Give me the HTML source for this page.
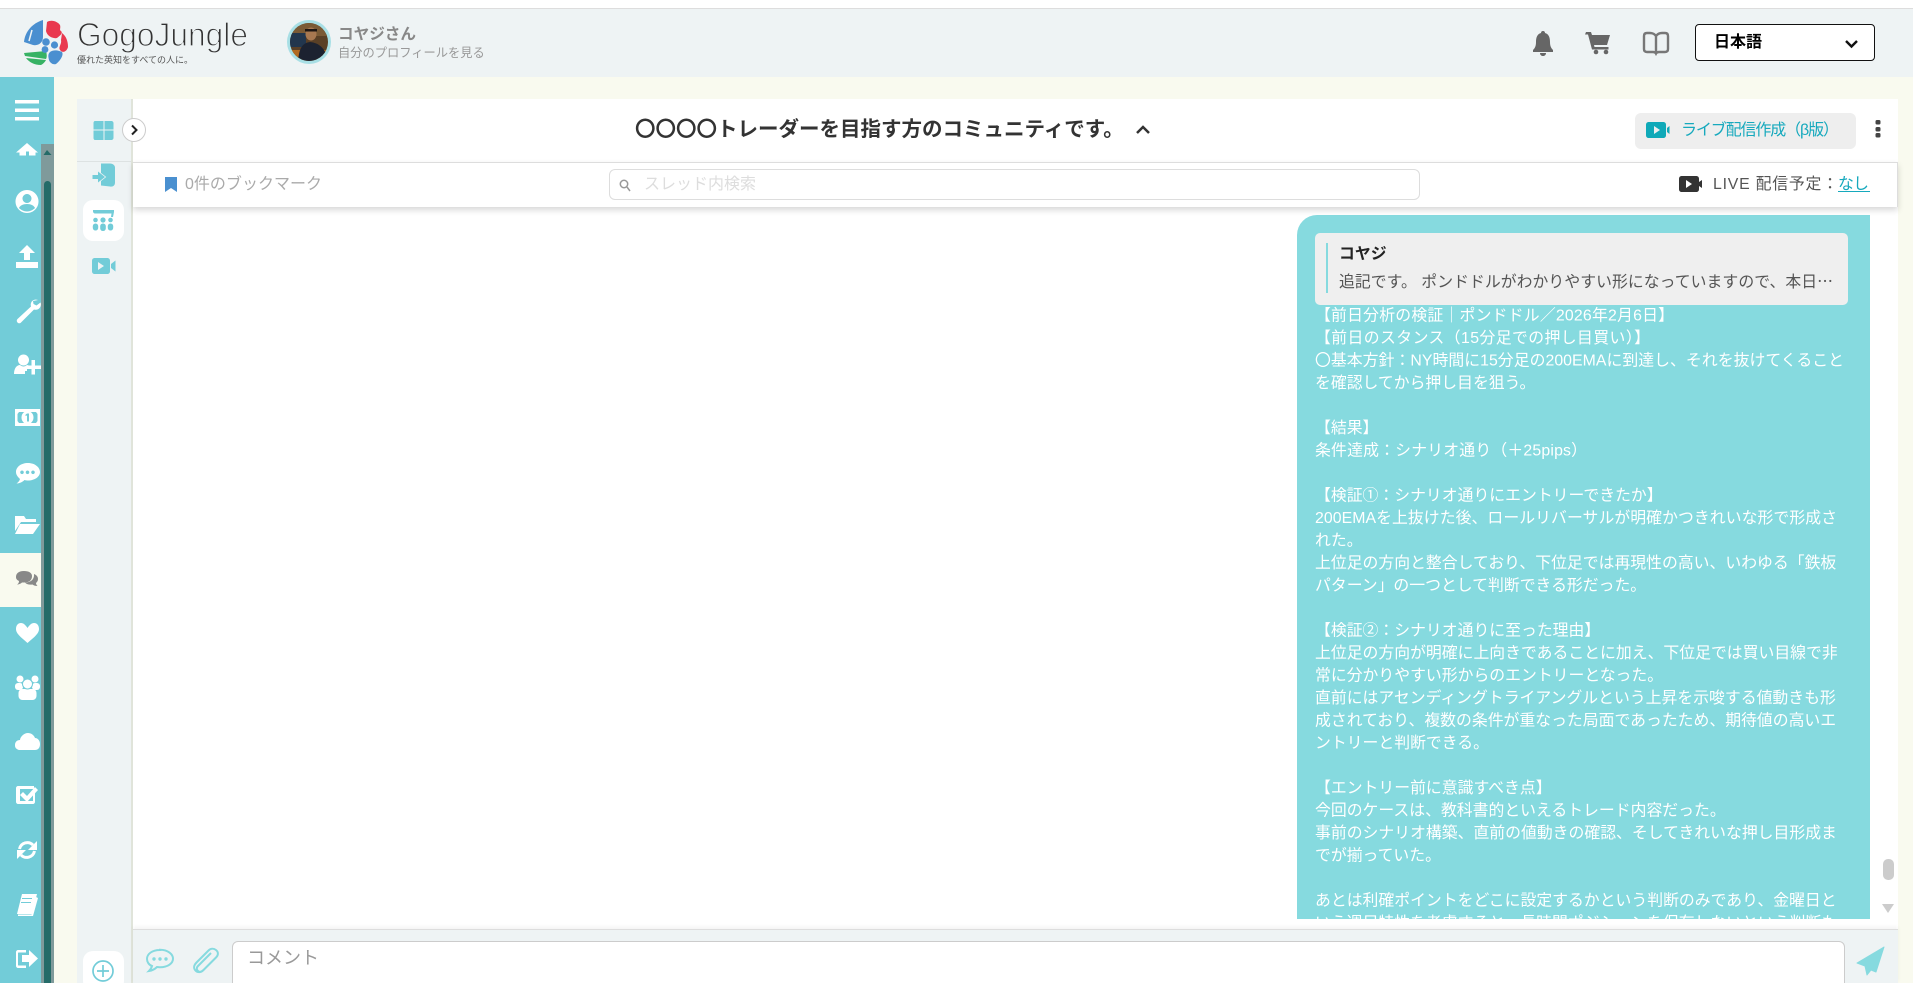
<!DOCTYPE html>
<html lang="ja"><head><meta charset="utf-8"><title>GogoJungle</title>
<style>
html,body{margin:0;padding:0;width:1913px;height:983px;overflow:hidden;background:#f9faef}
body{position:relative;font-family:"Liberation Sans","Noto Sans CJK JP",sans-serif}
.a{position:absolute;box-sizing:border-box}
svg{position:absolute;left:0;top:0;overflow:visible}
text{font-family:"Liberation Sans","Noto Sans CJK JP",sans-serif;white-space:pre}
.m text{font-size:15.85px;fill:#fff}
</style></head><body>
<div class="a" style="left:0;top:0;width:1913px;height:9px;background:#fff;border-bottom:1px solid #ddd"></div>
<div class="a" style="left:0;top:9px;width:1913px;height:68px;background:#eef3f4"></div>
<div class="a" style="left:0;top:77px;width:54px;height:906px;background:#72ccd8"></div>
<div class="a" style="left:0;top:553px;width:41px;height:54px;background:#f9faef"></div>
<div class="a" style="left:41px;top:144px;width:13px;height:839px;background:#7f9a9b"></div>
<div class="a" style="left:44px;top:181px;width:7px;height:802px;background:#246b68;border-radius:4px 4px 0 0"></div>
<div class="a" style="left:77px;top:99px;width:56px;height:884px;background:#eef3f4;border-right:2px solid #e0e4da"></div>
<div class="a" style="left:77px;top:161px;width:54px;height:1px;background:#dde2e2"></div>
<div class="a" style="left:83px;top:200px;width:41px;height:41px;background:#fff;border-radius:10px"></div>
<div class="a" style="left:83px;top:951px;width:41px;height:40px;background:#fff;border-radius:10px"></div>
<div class="a" style="left:133px;top:99px;width:1765px;height:884px;background:#fff"></div>
<div class="a" style="left:133px;top:162px;width:1765px;height:45px;background:#fff;border-top:1px solid #ddd;border-right:1px solid #ddd;box-shadow:0 3px 6px rgba(0,0,0,.16);z-index:2"></div>
<div class="a" style="left:609px;top:169px;width:811px;height:31px;background:#fff;border:1px solid #ddd;border-radius:6px;z-index:3"></div>
<div class="a" style="left:1635px;top:113px;width:221px;height:36px;background:#eee;border-radius:6px"></div>
<div class="a" style="left:1695px;top:24px;width:180px;height:37px;background:#fff;border:1.5px solid #111;border-radius:4px"></div>
<div class="a" style="left:1297px;top:215px;width:573px;height:704px;background:#86dadf;border-radius:20px 0 0 0"></div>
<div class="a" style="left:1315px;top:233px;width:533px;height:72px;background:#efefef;border-radius:5px"></div>
<div class="a" style="left:1326px;top:243px;width:2px;height:50px;background:#86dadf"></div>
<div class="a" style="left:1883px;top:859px;width:11px;height:21px;background:#ccc;border-radius:5px"></div>
<div class="a" style="left:133px;top:929px;width:1765px;height:54px;background:#eef3f4;border-top:1px solid #ddd;box-shadow:0 -2px 4px rgba(0,0,0,.05)"></div>
<div class="a" style="left:232px;top:941px;width:1613px;height:50px;background:#fff;border:1px solid #ccc;border-radius:6px"></div>

<svg width="1913" height="983" viewBox="0 0 1913 983" style="z-index:5">
<defs><clipPath id="c"><rect x="1297" y="215" width="573" height="704"/></clipPath>
<clipPath id="av"><circle cx="309" cy="42" r="19"/></clipPath></defs>

<!-- logo -->
<path d="M43 20C33 23 25 31 24 42L33 45C38 46 43 43 43 37Z" fill="#4a8fd0"/>
<path d="M32 30L29 41" stroke="#eef3f4" stroke-width="1.5" fill="none"/>
<path d="M47 22C52 19 58 22 60 25C61 28 59 30 61 31C63 33 61 35 57 38C53 39 47 36 46 31Z" fill="#e9394f"/>
<path d="M62 33C66 36 68 41 68 47C67 51 63 54 60 50C58 47 62 44 61 40Z" fill="#e9394f"/>
<path d="M24 53L46 51C47 55 47 57 46 59L25 56ZM26 58L46 60C45 62 43 64 41 65C34 65 29 62 26 58Z" fill="#37b264"/>
<circle cx="46" cy="42" r="3.8" fill="#4a8fd0"/><circle cx="54.500" cy="45" r="3.6" fill="#4a8fd0"/><circle cx="45" cy="49.500" r="3.4" fill="#4a8fd0"/>
<path d="M50 52C54 49 60 51 62 52C64 55 60 61 56 64C53 65 50 63 49 60C48 56 48 54 50 52Z" fill="#4a8fd0"/>
<text x="77" y="46" font-size="33" fill="#333" stroke="#eef3f4" stroke-width="1.2" textLength="171" lengthAdjust="spacingAndGlyphs">GogoJungle</text>
<text x="77" y="63" font-size="9" fill="#555">優れた英知をすべての人に。</text>

<!-- avatar -->
<circle cx="309" cy="42" r="22" fill="#a8dfe5"/>
<circle cx="309" cy="42" r="19" fill="#5a4026"/>
<g clip-path="url(#av)">
<rect x="288" y="22" width="44" height="14" fill="#7a5a35"/>
<rect x="290" y="33" width="16" height="14" fill="#22364d"/>
<rect x="288" y="50" width="44" height="12" fill="#b06a22"/>
<path d="M298 62C299 47 303 43 310 42C319 43 326 48 328 62Z" fill="#1c2230"/>
<ellipse cx="311" cy="34" rx="5.500" ry="6.500" fill="#a87850"/>
<rect x="305" y="29" width="12" height="2.500" fill="#1d1613"/>
</g>
<text x="338" y="39" font-size="15.600" font-weight="bold" fill="#888">コヤジさん</text>
<text x="338" y="57" font-size="12.250" fill="#999">自分のプロフィールを見る</text>

<!-- header right -->
<path d="M1543 31c1.500 0 2 1 2 2 4 1 5 5 5 9 0 4 1 6 3 8v2h-20v-2c2-2 3-4 3-8 0-4 1-8 5-9 0-1 .5-2 2-2zM1540 53h6c0 2-1.500 3-3 3s-3-1-3-3z" fill="#666"/>
<path d="M1586 32h5l1 3h18l-3 10h-13l.500 2h14v2.500h-16.500l-4-15h-3z" fill="#666"/><circle cx="1596" cy="52" r="2.300" fill="#666"/><circle cx="1606" cy="52" r="2.300" fill="#666"/>
<path d="M1656 36c-1.500-2-3-3-6-3h-3c-2 0-3 1-3 3v13c0 2 1 3 3 3h6c1.500 0 2.500 .5 3 1.500.5-1 1.500-1.500 3-1.500h6c2 0 3-1 3-3V36c0-2-1-3-3-3h-3c-3 0-4.500 1-6 3zM1656 36v17" fill="none" stroke="#777" stroke-width="2.400"/>
<text x="1714" y="47" font-size="16" font-weight="bold" fill="#000">日本語</text>
<path d="M1846 41l5.500 5.500 5.500-5.500" fill="none" stroke="#111" stroke-width="2.400"/>

<!-- sidebar icons -->
<g fill="#fff">
<rect x="15" y="100" width="24" height="3.500"/><rect x="15" y="108.500" width="24" height="3.500"/><rect x="15" y="117" width="24" height="3.500"/>
<path d="M27 143L16 152.500h3.500v3h6.500v-4h3v4h6.500v-3H38z"/>
<path fill-rule="evenodd" d="M27 190a11.500 11.500 0 1 0 .01 0zM27 194a4.500 4.500 0 1 1-.01 0zM27 204c4 0 7 1.500 8 4-2 2-5 3.500-8 3.500s-6-1.500-8-3.500c1-2.500 4-4 8-4z"/>
<path d="M27 245l8 8h-5v7h-6v-7h-5zM16 262h22v6H16z"/>
<path d="M38 300c-3-1-6 0-7 3-.5 1.500-.2 2.500 0 3.500L17.500 319c-1 1-1 2.500 0 3.500s2.500 1 3.500 0l13-13c1.500.5 3 .3 4.500-.5 2-1.500 3-4 2-6.500l-4 3-3-1.500-.5-3z"/>
<circle cx="23.500" cy="360" r="5.500"/><path d="M14 374c0-6 3-9 6-9 1 1 2.500 1.500 3.500 1.500s2.500-.5 3.500-1.500c1 0 2 .5 3 1v1h-3v4h-2v3z"/>
<path d="M31.500 360h3.500v5.500h6v3.500h-6v5.500h-3.500V369H26v-3.500h5.500z"/>
<rect x="15" y="409" width="25" height="17"/>
<path d="M19 412h17l1.500 2v7l-1.500 2H19l-1.500-2v-7z" fill="#72ccd8"/>
<ellipse cx="27.500" cy="417.500" rx="6" ry="6.500"/>
<path d="M27 413.500h2v8h-2v-6l-1.500.5v-1.300z" fill="#72ccd8"/>
<path fill-rule="evenodd" d="M28 463c-7 0-12 4-12 9 0 3 2 5 4 7-.5 2-2 3.500-3.500 4.500 3 0 6-1.500 8-3.500 1 .3 2.500.5 3.500.5 7 0 12-4 12-8.500s-5-9-12-9zM22 470.500a1.800 1.800 0 1 0 .01 0zM27.500 470.500a1.800 1.800 0 1 0 .01 0zM33 470.500a1.800 1.800 0 1 0 .01 0z"/>
<path d="M15 516h9l2 3h10v3H21l-6 9zM20 524h20l-7 10H15z"/>
<path d="M27.500 628c-2-3-4-5-6.500-5-3.500 0-5 3-5 6 0 5 6 9 11.500 14 5.500-5 11.500-9 11.500-14 0-3-1.500-6-5-6-2.500 0-4.500 2-6.500 5z"/>
<circle cx="20" cy="679" r="3.500"/><circle cx="35" cy="679" r="3.500"/>
<rect x="15" y="683" width="8" height="7" rx="3"/><rect x="32" y="683" width="8" height="7" rx="3"/>
<rect x="18.500" y="689" width="18" height="11" rx="4"/>
<circle cx="27.500" cy="684" r="5" stroke="#72ccd8" stroke-width="1"/>
<path d="M17 749c-2-1-2-3-2-4 0-3 2-5 5-5 0-3 4-7 8-7 3 0 6 2 7 5 3 0 5 3 5 6 0 4-2 6-5 6H20c-1 0-2 0-3-1z"/>
<path d="M18 786h16v3H20v12h13v-7l2-2v10c0 1-1 2-2 2H18c-1 0-2-1-2-2v-14c0-1 1-2 2-2zM23 792l4 4 8-9 3 3-11 12-7-7z"/>
<path d="M37 841V850H28ZM17 859V850H26Z"/>
<path d="M19.500 849a8 8 0 0 1 13.500-4M34.500 851a8 8 0 0 1-13.500 4" fill="none" stroke="#fff" stroke-width="3"/>
<path d="M22 894h15l-5 20H17zM22 899h10v-1H22zM21 903h10v-1H21z" fill-rule="evenodd"/><path d="M36 897l2 1-5 18H18v-1.500h13.500z"/>
<path d="M18 950h8v2.500h-7.500c-.5 0-.5.5-.5 1v11c0 .5 0 1 .5 1H26v2.500h-8c-1 0-2-1-2-2v-14c0-1 1-2 2-2zM22 955h7v-5l9 8.500-9 8.500v-5h-7z"/>
</g>
<path d="M32 576c0-3-3-5-8-5-6 0-8 3-8 6 0 2 1 3 3 4 0 2-1 3-2 3.500 2 0 4-1 5-2h2c5 0 8-2 8-6.500z" fill="#888"/>
<path d="M34 574c2.500 1 4 2.500 4 5 0 2-1 3-2 4 0 1 .5 2 1.500 3-2 0-4-.5-5-1.500-3 .5-6 0-7.500-2 5 0 9.500-2.500 9-8.500z" fill="#888"/>
<path d="M47 150l4.500 5h-8z" fill="#246b68"/>

<!-- channel panel -->
<g fill="#72ccd8">
<path d="M95 121h8.500v8.500H93.500V123c0-1 .5-2 1.500-2zM104.500 121h7c1 0 2 1 2 2v6.500h-9zM93.500 130.500h10V140H95c-1 0-1.500-1-1.500-2zM104.500 130.500h9v7.500c0 1-1 2-2 2h-7z"/>
<path d="M101 163.500h9c3 0 5 2 5 4v15c0 3-2 4.500-5 4l-9-1z"/>
<path d="M98 171.500l7 5.500-7 5.500v-3.500h-5.500v-4H98z" stroke="#eef3f4" stroke-width="1.500" paint-order="stroke"/>
<path d="M93 210h21v2l-1 5h-2l.5-3.500H95c-1 0-2-1-2-2z"/>
<circle cx="95.500" cy="220" r="2.300"/><circle cx="103" cy="220" r="2.600"/><circle cx="110.500" cy="220" r="2.300"/>
<rect x="92.800" y="223.500" width="5.400" height="7" rx="2.600"/><rect x="100.200" y="223.500" width="5.600" height="7.500" rx="2.600"/><rect x="107.800" y="223.500" width="5.400" height="7" rx="2.600"/>
<path fill-rule="evenodd" d="M95 258h12c2 0 3 1 3 3v10c0 2-1 3-3 3H95c-2 0-3-1-3-3v-10c0-2 1-3 3-3zM98 262v8l6-4zM111 264l4.500-3.500v11l-4.500-3.500z"/>
</g>
<circle cx="103" cy="971" r="10" fill="none" stroke="#72ccd8" stroke-width="1.700"/><path d="M103 965v12M97 971h12" stroke="#72ccd8" stroke-width="1.700"/>
<circle cx="134" cy="130" r="11.500" fill="#fff" stroke="#ccc" stroke-width="1"/><path d="M132 125.500l4.500 4.500-4.500 4.500" fill="none" stroke="#222" stroke-width="2"/>

<!-- title -->
<text x="635" y="136" font-size="20.500" font-weight="bold" fill="#333">〇〇〇〇トレーダーを目指す方のコミュニティです。</text>
<path d="M1137 133l6-6 6 6" fill="none" stroke="#333" stroke-width="2.500"/>
<path fill-rule="evenodd" d="M1649 122h14c2 0 3 1 3 3v10c0 2-1 3-3 3h-14c-2 0-3-1-3-3v-10c0-2 1-3 3-3zM1654 126v8l6-4zM1667 128l2.500-2v8l-2.500-2z" fill="#0fa9b8"/>
<text x="1681" y="135" font-size="16" fill="#16a9bd" textLength="158">ライブ配信作成（β版）</text>
<g fill="#444"><rect x="1875.500" y="120" width="5" height="4.500" rx="1.500"/><rect x="1875.500" y="127" width="5" height="4.500" rx="1.500"/><rect x="1875.500" y="133" width="5" height="4.500" rx="1.500"/></g>

<!-- bookmark bar -->
<path d="M165 177h12v15l-6-4-6 4z" fill="#4a90d0"/>
<text x="185" y="189" font-size="16" fill="#aaa" textLength="137">0件のブックマーク</text>
<circle cx="624" cy="184" r="3.700" fill="none" stroke="#999" stroke-width="1.500"/><path d="M627 187l3 4" stroke="#999" stroke-width="1.500"/>
<text x="644" y="189" font-size="16" fill="#ddd">スレッド内検索</text>
<path fill-rule="evenodd" d="M1682 176h14c2 0 3 1 3 3v10c0 2-1 3-3 3h-14c-2 0-3-1-3-3v-10c0-2 1-3 3-3zM1686 180v8l6-4zM1699 182l3-2v8l-3-2z" fill="#333"/>
<text x="1713" y="189" font-size="15.850" fill="#555" textLength="125">LIVE 配信予定：</text>
<text x="1838" y="189" font-size="15.850" fill="#16a9bd" textLength="31">なし</text>
<rect x="1838" y="191" width="32" height="1" fill="#16a9bd"/>

<!-- bubble -->
<text x="1339" y="259" font-size="15.850" font-weight="bold" fill="#222">コヤジ</text>
<text x="1339" y="287" font-size="15.850" fill="#555" textLength="494">追記です。 ポンドドルがわかりやすい形になっていますので、本日<tspan font-family="Noto Sans CJK JP">…</tspan></text>
<g class="m" clip-path="url(#c)">
<text x="1315" y="320.500" textLength="359">【前日分析の検証｜ポンドドル／2026年2月6日】</text>
<text x="1315" y="343" textLength="335">【前日のスタンス（15分足での押し目買い）】</text>
<text x="1315" y="365.500" textLength="529">〇基本方針：NY時間に15分足の200EMAに到達し、それを抜けてくること</text>
<text x="1315" y="388">を確認してから押し目を狙う。</text>
<text x="1315" y="433">【結果】</text>
<text x="1315" y="455.500" textLength="272">条件達成：シナリオ通り（＋25pips）</text>
<text x="1315" y="500.500">【検証①：シナリオ通りにエントリーできたか】</text>
<text x="1315" y="523" textLength="522">200EMAを上抜けた後、ロールリバーサルが明確かつきれいな形で形成さ</text>
<text x="1315" y="545.500">れた。</text>
<text x="1315" y="568">上位足の方向と整合しており、下位足では再現性の高い、いわゆる「鉄板</text>
<text x="1315" y="590.500">パターン」の一つとして判断できる形だった。</text>
<text x="1315" y="635.500">【検証②：シナリオ通りに至った理由】</text>
<text x="1315" y="658">上位足の方向が明確に上向きであることに加え、下位足では買い目線で非</text>
<text x="1315" y="680.500">常に分かりやすい形からのエントリーとなった。</text>
<text x="1315" y="703">直前にはアセンディングトライアングルという上昇を示唆する値動きも形</text>
<text x="1315" y="725.500">成されており、複数の条件が重なった局面であったため、期待値の高いエ</text>
<text x="1315" y="748">ントリーと判断できる。</text>
<text x="1315" y="793">【エントリー前に意識すべき点】</text>
<text x="1315" y="815.500">今回のケースは、教科書的といえるトレード内容だった。</text>
<text x="1315" y="838">事前のシナリオ構築、直前の値動きの確認、そしてきれいな押し目形成ま</text>
<text x="1315" y="860.500">でが揃っていた。</text>
<text x="1315" y="905.500">あとは利確ポイントをどこに設定するかという判断のみであり、金曜日と</text>
<text x="1315" y="928">いう週足特性を考慮すると、長時間ポジションを保有しないという判断も</text>
</g>
<path d="M1882 904h12l-6 9z" fill="#ccc"/>

<!-- footer -->
<path d="M160 950c-8 0-13 4-13 9 0 3 2 6 5 7-.5 2-2 4-3 5 3-.5 6-2 8-4 1 0 2 .2 3 .2 8 0 13-4 13-8.500s-5-9-13-9z" fill="none" stroke="#86dadf" stroke-width="2"/>
<circle cx="154" cy="959" r="1.700" fill="#86dadf"/><circle cx="160" cy="959" r="1.700" fill="#86dadf"/><circle cx="166" cy="959" r="1.700" fill="#86dadf"/>
<path d="M211 953l-13 13c-2 2-1 4 0 5s3 1.500 5-.5l13-13c3-3 2-6 0-7.500s-5-2-7.500 .5l-12 12c-3 3-3 6-1 8s5 2.500 8-.5l10-10" fill="none" stroke="#86dadf" stroke-width="2"/>
<text x="247" y="964" font-size="18" fill="#999">コメント</text>
<path d="M1884 947l-27 16 8 3 2 9 4-5 5 2zM1884 947l-17 19" fill="#86dadf" stroke="#86dadf" stroke-width="1" stroke-linejoin="round"/>
</svg>
</body></html>
